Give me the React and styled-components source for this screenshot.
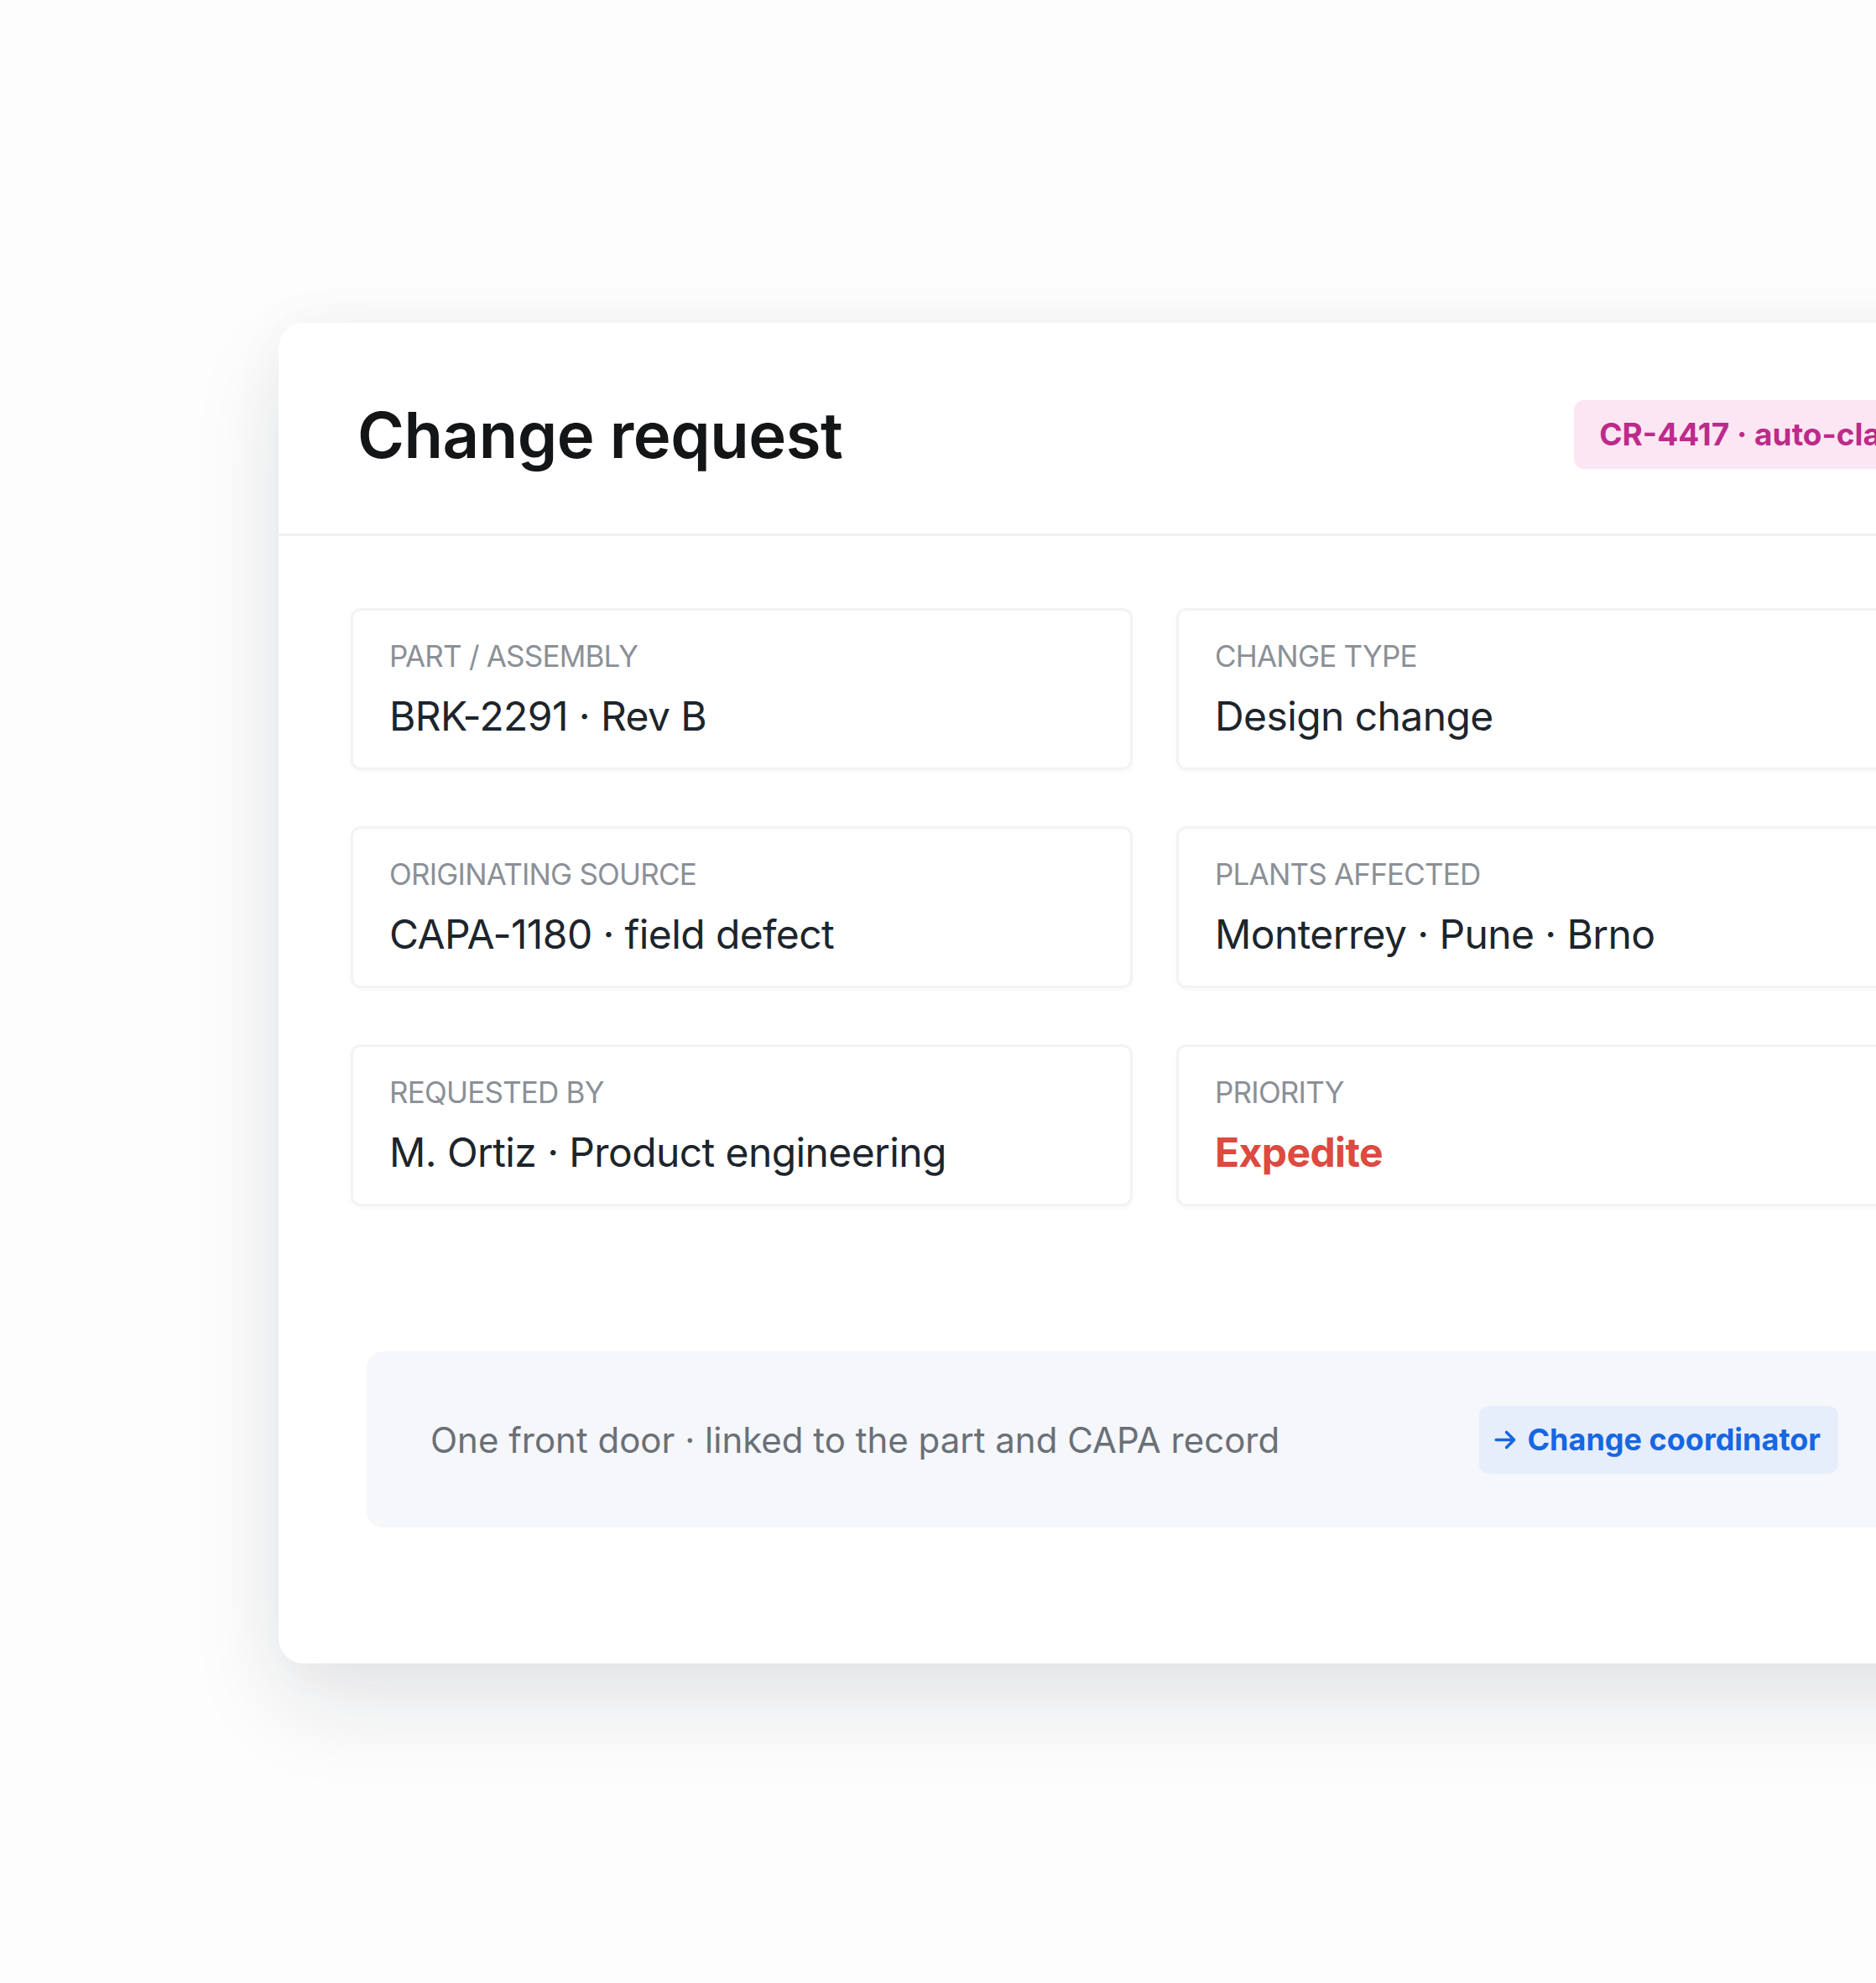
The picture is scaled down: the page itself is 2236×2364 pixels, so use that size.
import React from "react";
import styled, { createGlobalStyle } from "styled-components";

const GlobalStyle = createGlobalStyle`
  html, body {
    margin: 0;
    padding: 0;
    overflow: hidden;
    background: #fdfdfd;
    font-family: Inter, "Noto Sans", "Liberation Sans", sans-serif;
  }
`;

const Page = styled.div`
  width: 2236px;
  height: 2364px;
  overflow: hidden;
  padding: 385px 0 0 332px;
  box-sizing: border-box;
`;

const Card = styled.section`
  width: 2156px;
  height: 1598px;
  background: #ffffff;
  border-radius: 30px;
  box-shadow: 0 50px 110px rgba(20, 30, 50, 0.1), 0 0 70px rgba(20, 30, 50, 0.035);
  display: flex;
  flex-direction: column;
`;

const Header = styled.header`
  height: 254px;
  box-sizing: border-box;
  padding: 14px 94px 0;
  display: flex;
  align-items: center;
  justify-content: space-between;
  border-bottom: 3px solid #f0f1f3;
`;

const Title = styled.h1`
  margin: 0;
  font-size: 76px;
  font-weight: 600;
  letter-spacing: -0.5px;
  color: #141517;
`;

const Badge = styled.span`
  display: inline-flex;
  align-items: center;
  height: 82px;
  padding: 0 30px;
  border-radius: 12px;
  background: #fce6f3;
  color: #bd2a8b;
  font-size: 37px;
  font-weight: 700;
  white-space: nowrap;
`;

const Body = styled.div`
  padding: 86px 86px 0;
`;

const Grid = styled.div`
  display: grid;
  grid-template-columns: repeat(2, 932px);
  column-gap: 52px;
  row-gap: 67px;
`;

const Field = styled.div`
  height: 193px;
  box-sizing: border-box;
  padding: 32px 43px 0;
  border: 3px solid #f2f3f5;
  border-radius: 12px;
  background: #fff;
  box-shadow: 0 2px 6px rgba(20, 30, 50, 0.03);
`;

const Label = styled.div`
  font-size: 35px;
  line-height: 44px;
  color: #8b9097;
  text-transform: uppercase;
  letter-spacing: -0.8px;
`;

const Value = styled.div`
  margin-top: 19px;
  font-size: 48px;
  line-height: 62px;
  letter-spacing: -0.6px;
  font-weight: ${(p) => (p.$alert ? 700 : 400)};
  color: ${(p) => (p.$alert ? "#dc4a40" : "#1d252c")};
  white-space: nowrap;
`;

const Strip = styled.div`
  margin: 173px 135px 0 19px;
  height: 210px;
  box-sizing: border-box;
  padding: 0 76px;
  border-radius: 20px;
  background: #f5f7fa;
  display: flex;
  align-items: center;
  justify-content: space-between;
`;

const StripText = styled.span`
  font-size: 42px;
  color: #6a7078;
  white-space: nowrap;
`;

const LinkButton = styled.span`
  display: inline-flex;
  align-items: center;
  gap: 12px;
  height: 81px;
  padding: 0 21px 0 18px;
  border-radius: 12px;
  background: #e6eefb;
  color: #1766e2;
  font-size: 36px;
  font-weight: 700;
  white-space: nowrap;
`;

const fields = [
  { label: "Part / Assembly", value: "BRK-2291 · Rev B" },
  { label: "Change type", value: "Design change" },
  { label: "Originating source", value: "CAPA-1180 · field defect" },
  { label: "Plants affected", value: "Monterrey · Pune · Brno" },
  { label: "Requested by", value: "M. Ortiz · Product engineering" },
  { label: "Priority", value: "Expedite", alert: true },
];

export default function App() {
  return (
    <Page>
      <GlobalStyle />
      <Card>
        <Header>
          <Title>Change request</Title>
          <Badge>CR-4417 · auto-classified</Badge>
        </Header>
        <Body>
          <Grid>
            {fields.map((f) => (
              <Field key={f.label}>
                <Label>{f.label}</Label>
                <Value $alert={f.alert}>{f.value}</Value>
              </Field>
            ))}
          </Grid>
          <Strip>
            <StripText>One front door · linked to the part and CAPA record</StripText>
            <LinkButton>
              <svg width="27" height="27" viewBox="0 0 24 24" fill="none">
                <path
                  d="M2 12h19M13 4l8 8-8 8"
                  stroke="currentColor"
                  strokeWidth="3.2"
                  strokeLinecap="round"
                  strokeLinejoin="round"
                />
              </svg>
              Change coordinator
            </LinkButton>
          </Strip>
        </Body>
      </Card>
    </Page>
  );
}
